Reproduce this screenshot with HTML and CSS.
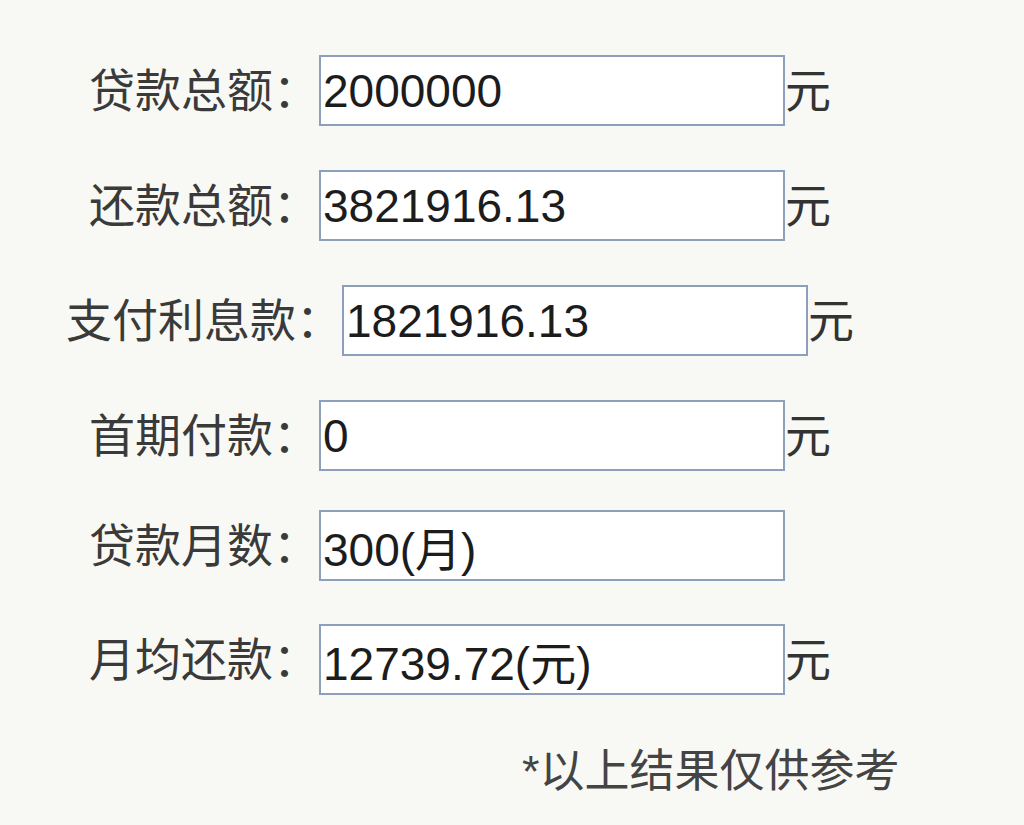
FILE: index.html
```html
<!DOCTYPE html>
<html lang="zh-CN">
<head>
<meta charset="utf-8">
<title>贷款计算结果</title>
<link rel="stylesheet" href="styles.css">
</head>
<body>
<div class="result">
  <div class="row"><span class="label">贷款总额：</span><input class="field" type="text" value="2000000" readonly><span class="unit">元</span></div>
  <div class="row"><span class="label">还款总额：</span><input class="field" type="text" value="3821916.13" readonly><span class="unit">元</span></div>
  <div class="row"><span class="label">支付利息款：</span><input class="field" type="text" value="1821916.13" readonly><span class="unit">元</span></div>
  <div class="row row-tight"><span class="label">首期付款：</span><input class="field" type="text" value="0" readonly><span class="unit">元</span></div>
  <div class="row row-mid"><span class="label">贷款月数：</span><input class="field" type="text" value="300(月)" readonly><span class="unit unit-empty">元</span></div>
  <div class="row"><span class="label">月均还款：</span><input class="field" type="text" value="12739.72(元)" readonly><span class="unit">元</span></div>
  <div class="note">*以上结果仅供参考</div>
</div>
</body>
</html>
```
FILE: styles.css
```css
html, body {
  margin: 0;
  padding: 0;
  background: #f8f9f4;
}

body {
  font-family: "Liberation Sans", "Noto Sans CJK SC", sans-serif;
  color: #3a3a3a;
  font-size: 46px;
}

.result {
  width: 920px;
  padding-top: 55px;
}

.row {
  display: flex;
  justify-content: center;
  align-items: center;
  height: 71px;
  margin-bottom: 44px;
}

.row-tight {
  margin-bottom: 39px;
}

.row-mid {
  margin-bottom: 43px;
}

.label {
  white-space: nowrap;
  line-height: 1;
}

.field {
  box-sizing: border-box;
  width: 466px;
  height: 71px;
  margin: 0;
  padding: 0 2px;
  border: 2px solid #8d9fba;
  background: #ffffff;
  font-family: "Liberation Sans", "Noto Sans CJK SC", sans-serif;
  font-size: 46px;
  color: #1c1c1c;
  outline: none;
}

.unit {
  width: 46px;
  line-height: 1;
  color: #333333;
}

.unit-empty {
  visibility: hidden;
}

.note {
  padding-left: 522px;
  margin-top: 8px;
  line-height: 66px;
  font-size: 45px;
  color: #444444;
  white-space: nowrap;
}
```
